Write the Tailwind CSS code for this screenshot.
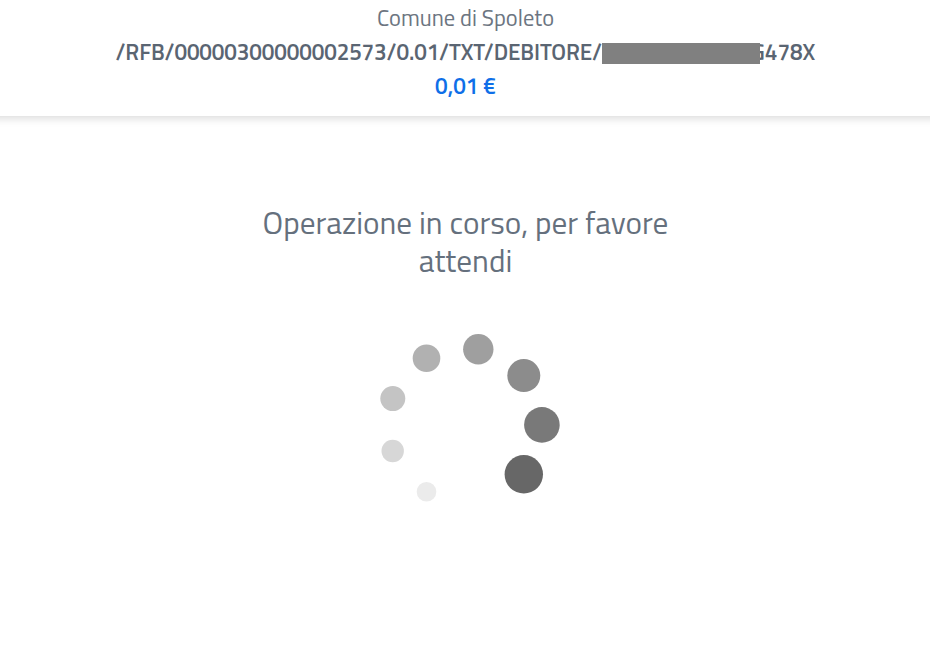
<!DOCTYPE html>
<html lang="it">
<head>
<meta charset="utf-8">
<title>Comune di Spoleto</title>
<script src="https://cdn.jsdelivr.net/npm/@tailwindcss/browser@4"></script>
</head>
<body class="w-[930px] h-[645px] overflow-hidden bg-white text-[#5c6f82] font-['Titillium_Web',Roboto,sans-serif]">
<header class="h-[117px] -mx-3 flex flex-col items-center pt-0.5 pl-px border-b border-[#e6e6e6] shadow-[0_1px_8px_1px_rgba(0,0,0,0.13)] whitespace-nowrap">
  <p class="text-[22.5px] leading-[33px] font-normal text-[#6c7581]"><span>Comune di Spoleto</span></p>
  <p class="text-[22.5px] leading-[34px] font-semibold text-[#5a6572] flex items-center w-[700px]">
    <span class="w-[486px] tracking-[-0.12px]">/RFB/00000300000002573/0.01/TXT/DEBITORE/</span>
    <span class="relative top-px z-10 w-[158px] h-[21px] bg-[#808080]"></span>
    <span class="-ml-[8.5px]">G478X</span>
  </p>
  <p class="text-[22.5px] leading-[34px] font-semibold text-[#0f6fe8]"><span>0,01 €</span></p>
</header>
<main class="flex flex-col items-center pt-[87px] pl-px">
  <h1 class="text-[31.25px] leading-[37.5px] font-normal text-center text-[#65707d]">Operazione in corso, per favore<br>attendi</h1>
  <svg class="mt-[46px] ml-[9px]" width="200" height="190" viewBox="370 325 200 190">
    <circle cx="426.5" cy="491.7" r="9.8" fill="#ebebeb"/>
    <circle cx="392.7" cy="451" r="11.2" fill="#d7d7d7"/>
    <circle cx="392.8" cy="398.6" r="12.5" fill="#c4c4c4"/>
    <circle cx="426.5" cy="358.2" r="13.8" fill="#b1b1b1"/>
    <circle cx="478.3" cy="349.2" r="15.2" fill="#9f9f9f"/>
    <circle cx="523.8" cy="375.6" r="16.5" fill="#8c8c8c"/>
    <circle cx="541.9" cy="424.9" r="17.8" fill="#797979"/>
    <circle cx="523.8" cy="474.3" r="19.2" fill="#676767"/>
  </svg>
</main>
</body>
</html>
